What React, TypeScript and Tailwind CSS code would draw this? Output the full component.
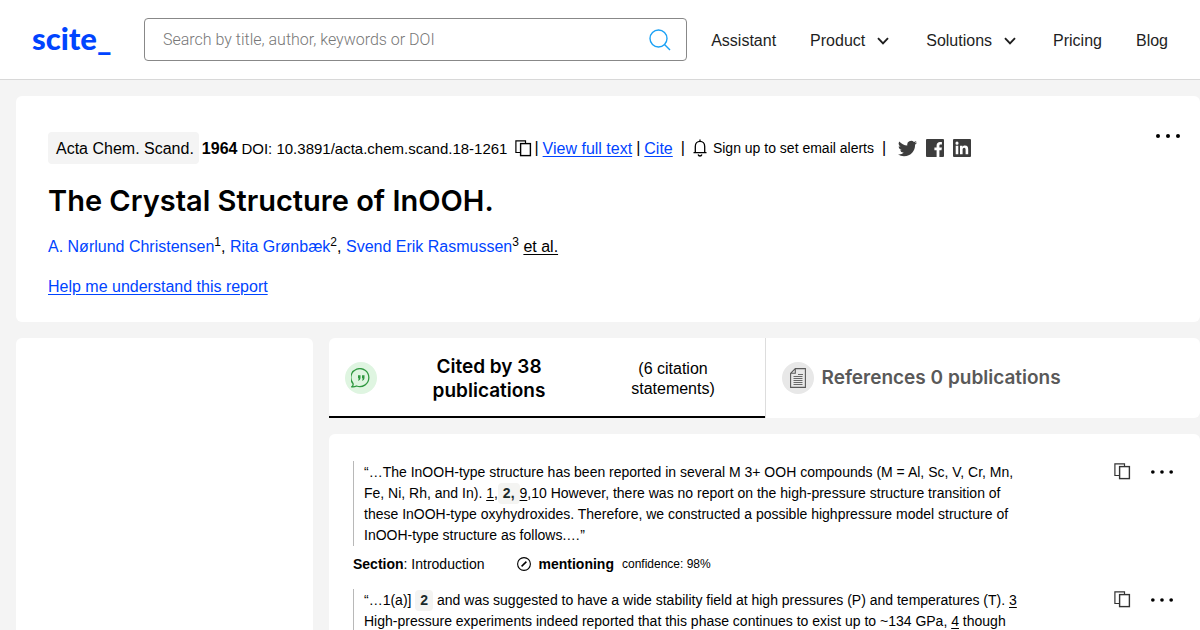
import type { ReactNode } from 'react';

function CopyIcon({ className }: { className: string }) {
  return (
    <svg viewBox="0 0 17 17" className={className} fill="none" stroke="currentColor" aria-hidden="true">
      <path d="M5 12.5H.9V.9h9.6V3" strokeWidth="1.2" />
      <rect x="5.6" y="3.6" width="9.8" height="12" fill="white" strokeWidth="1.4" />
    </svg>
  );
}

function MoreIcon({ className }: { className: string }) {
  return (
    <svg viewBox="0 0 24 4" className={className} fill="currentColor" aria-hidden="true">
      <circle cx="2" cy="2" r="2" />
      <circle cx="12" cy="2" r="2" />
      <circle cx="22" cy="2" r="2" />
    </svg>
  );
}

function ChevronIcon() {
  return (
    <svg viewBox="0 0 12 8" className="h-2 w-3" fill="none" stroke="currentColor" strokeWidth="1.9" aria-hidden="true">
      <path d="M1 1.2 6 6.4l5-5.2" />
    </svg>
  );
}

function TwitterIcon() {
  return (
    <svg viewBox="0 0 24 24" className="size-[19px]" fill="currentColor" aria-hidden="true">
      <path d="M23.95 4.57a10 10 0 0 1-2.82.77 4.96 4.96 0 0 0 2.16-2.72c-.95.55-2 .95-3.13 1.18a4.92 4.92 0 0 0-8.38 4.48C7.69 8.09 4.07 6.13 1.64 3.16a4.92 4.92 0 0 0 1.52 6.57 4.9 4.9 0 0 1-2.23-.61v.06a4.92 4.92 0 0 0 3.95 4.83 5 5 0 0 1-2.21.08 4.94 4.94 0 0 0 4.6 3.42A9.87 9.87 0 0 1 0 19.54a13.99 13.99 0 0 0 7.55 2.21c9.05 0 14-7.5 14-13.98 0-.21 0-.42-.02-.63a9.94 9.94 0 0 0 2.46-2.55z" />
    </svg>
  );
}

function FacebookIcon() {
  return (
    <svg viewBox="0 0 18 18" className="size-[18px]" aria-hidden="true">
      <rect width="18" height="18" rx="1" fill="currentColor" />
      <path d="M10.600 18v-6.800H8.400V8.500h2.200V6.600c0-2.300 1.400-3.500 3.400-3.500h1.900v2.400h-1.200c-1 0-1.300.5-1.300 1.300v1.700h2.500l-.4 2.700h-2.100V18z" fill="white" />
    </svg>
  );
}

function LinkedinIcon() {
  return (
    <svg viewBox="0 0 18 18" className="size-[18px]" aria-hidden="true">
      <rect width="18" height="18" rx="1" fill="currentColor" />
      <path d="M2.700 6.800h2.600v8.400H2.700zM4 2.600a1.500 1.500 0 1 1 0 3.100 1.500 1.500 0 0 1 0-3.100zM7 6.800h2.500v1.100c.5-.8 1.400-1.300 2.500-1.300 2.500 0 3.200 1.600 3.200 3.900v4.700h-2.600v-4.200c0-1.200-.2-2.200-1.400-2.200-1.300 0-1.600 1-1.600 2.200v4.200H7z" fill="white" />
    </svg>
  );
}

function BellIcon() {
  return (
    <svg viewBox="0 0 14 18" className="h-[18px] w-3.5" fill="none" stroke="currentColor" strokeWidth="1.3" aria-hidden="true">
      <path d="M.5 13.700h13M2.300 13.500V7.400C2.300 4.500 4.300 2.400 7 2.400s4.700 2.100 4.700 5v6.100M7 .5v2M5.100 15.500c.3.900 1 1.500 1.900 1.500s1.600-.6 1.900-1.500" />
    </svg>
  );
}

function Statement({ children }: { children: ReactNode }) {
  return (
    <div className="flex items-start justify-between">
      <blockquote className="max-w-[670px] border-l border-[#b8b8b8] pt-px pl-2.5 text-sm leading-[21px]">{children}</blockquote>
      <div className="flex shrink-0 items-center gap-5 pt-0.5 pr-[27px]">
        <button type="button" aria-label="Copy statement" className="text-[#333]">
          <CopyIcon className="size-[17px]" />
        </button>
        <button type="button" aria-label="More options">
          <MoreIcon className="h-1 w-[22px]" />
        </button>
      </div>
    </div>
  );
}

function Mark({ children }: { children: ReactNode }) {
  return <span className="inline-block rounded bg-[#f4f4f2] px-[5px] font-bold text-[#1a2a2a]">{children}</span>;
}

function Ref({ children }: { children: ReactNode }) {
  return <a href="#" className="underline underline-offset-2">{children}</a>;
}

export default function App() {
  return (
    <div className="flex h-screen flex-col overflow-hidden bg-[#f4f4f4] font-['Liberation_Sans',sans-serif] text-base text-black">
      <header className="flex h-20 shrink-0 items-center border-b border-[#d8d8d8] bg-white px-8">
        <a href="#" className="w-28 shrink-0 pb-1 font-['Lato',sans-serif] text-[31px] leading-8 font-black text-[#0044ff]">scite_</a>
        <form className="flex h-[43px] flex-1 items-center rounded border border-[#888] pr-[15px] pl-[18px]">
          <input
            type="search"
            aria-label="Search"
            placeholder="Search by title, author, keywords or DOI"
            className="min-w-0 flex-1 font-['Roboto',sans-serif] font-light outline-none placeholder:text-[#777]"
          />
          <button type="button" aria-label="Search" className="text-[#1ba1f5]">
            <svg viewBox="0 0 22 22" className="size-[22px]" fill="none" stroke="currentColor" strokeWidth="1.4" aria-hidden="true">
              <circle cx="9.500" cy="9.500" r="8.500" />
              <path d="m15.500 15.500 5.500 5.500" />
            </svg>
          </button>
        </form>
        <nav className="ml-6 flex items-center gap-[34px] pt-0.5 text-[#1e1e1e]">
          <a href="#">Assistant</a>
          <button type="button" className="flex items-center gap-3 pr-[3px]">Product <ChevronIcon /></button>
          <button type="button" className="flex items-center gap-3 pr-[3px]">Solutions <ChevronIcon /></button>
          <a href="#">Pricing</a>
          <a href="#">Blog</a>
        </nav>
      </header>

      <main className="flex min-h-0 flex-1 flex-col gap-4 pt-4 pl-4">
        <section className="flex shrink-0 items-start rounded-md bg-white pt-9 pr-5 pb-6 pl-8">
          <div className="flex-1">
            <div className="flex h-8 items-center whitespace-nowrap">
              <span className="mr-[3px] rounded bg-[#f4f4f4] pt-[5px] pr-[5px] pb-[3px] pl-2">Acta Chem. Scand.</span>
              <strong className="pt-0.5">1964</strong>
              <span className="ml-1 pt-0.5 text-[15px]">DOI: 10.3891/acta.chem.scand.18-1261</span>
              <button type="button" aria-label="Copy DOI" className="ml-2"><CopyIcon className="size-[17px]" /></button>
              <span className="ml-0.5">|</span>
              <a href="#" className="ml-1 pt-0.5 text-[#0044ff] underline underline-offset-2">View full text</a>
              <span className="ml-1">|</span>
              <a href="#" className="ml-1 pt-0.5 text-[#0044ff] underline underline-offset-2">Cite</a>
              <span className="ml-2">|</span>
              <button type="button" className="ml-2 flex items-center gap-1.5 text-sm"><BellIcon />Sign up to set email alerts</button>
              <span className="ml-2">|</span>
              <span className="ml-3 flex items-center gap-[9px] text-[#3d3d3d]">
                <a href="#" aria-label="Twitter"><TwitterIcon /></a>
                <a href="#" aria-label="Facebook"><FacebookIcon /></a>
                <a href="#" aria-label="LinkedIn"><LinkedinIcon /></a>
              </span>
            </div>
            <h1 className="mt-[17px] font-['Inter',sans-serif] text-[29px] leading-10 font-semibold">The Crystal Structure of InOOH.</h1>
            <p className="mt-3.5 leading-6">
              <a href="#" className="text-[#0044ff]">A. Nørlund Christensen</a><sup className="text-xs">1</sup>,{' '}
              <a href="#" className="text-[#0044ff]">Rita Grønbæk</a><sup className="text-xs">2</sup>,{' '}
              <a href="#" className="text-[#0044ff]">Svend Erik Rasmussen</a><sup className="text-xs">3</sup>{' '}
              <a href="#" className="underline underline-offset-2">et al.</a>
            </p>
            <a href="#" className="-mb-px mt-4 block w-fit leading-6 text-[#0044ff] underline underline-offset-2">Help me understand this report</a>
          </div>
          <button type="button" aria-label="More options"><MoreIcon className="mt-0.5 h-1 w-6" /></button>
        </section>

        <div className="flex min-h-0 flex-1 gap-4">
          <aside className="w-[297px] shrink-0 rounded-t-md bg-white" />
          <div className="flex min-w-0 flex-1 flex-col gap-4">
            <div className="grid h-20 shrink-0 grid-cols-2 rounded-md bg-white">
              <button type="button" className="flex items-center rounded-tl-md border-b-2 border-black px-4 pt-0.5">
                <span className="flex size-8 shrink-0 items-center justify-center rounded-full bg-[#dff5e1] text-[#2f9840]">
                  <svg viewBox="0 0 20 20" className="size-5" fill="none" stroke="currentColor" strokeWidth="1.3" aria-hidden="true">
                    <path d="M.8 18.800c1.200-.8 1.600-1.700 1.200-3.300A9 9 0 1 1 5.500 18c-1.500.8-3 1-4.700.8z" />
                    <path d="M7 7.300h2.500v2.500c0 1.600-.8 2.600-2.100 3l-.4-.8c.7-.3 1-.9 1-1.500H7zm4 0h2.500v2.500c0 1.600-.8 2.600-2.100 3l-.4-.8c.7-.3 1-.9 1-1.500h-1z" fill="currentColor" stroke="none" />
                  </svg>
                </span>
                <span className="ml-10 w-[144px] pt-0.5 font-['Inter',sans-serif] text-[19px] leading-6 font-semibold">Cited by 38 publications</span>
                <span className="ml-16 w-[96px] pt-0.5 leading-5">(6 citation statements)</span>
              </button>
              <button type="button" className="flex items-center gap-2 border-l border-[#ddd] px-4 text-[#595959]">
                <span className="flex size-8 shrink-0 items-center justify-center rounded-full bg-[#e8e8e8]">
                  <svg viewBox="0 0 16 20" className="h-5 w-4" fill="none" stroke="currentColor" strokeWidth="1.1" aria-hidden="true">
                    <path d="M.6 5.300 5.300.6h10.100v18.800H.6zM5.300.6v4.700H.6" />
                    <path d="M8 6.500h5M3.500 8.500h9M3.500 10.500h9M3.500 12.500h9M3.500 14.500h9M3.500 16.500h9" strokeWidth=".9" />
                  </svg>
                </span>
                <span className="font-['Inter',sans-serif] text-[19px] font-semibold">References 0 publications</span>
              </button>
            </div>

            <section className="min-h-0 flex-1 overflow-hidden rounded-t-md bg-white pt-[27px] pl-6">
              <Statement>
                “…The InOOH-type structure has been reported in several M 3+ OOH compounds (M = Al, Sc, V, Cr, Mn, Fe, Ni, Rh, and In). <Ref>1</Ref>,<Mark>2,</Mark><Ref>9</Ref>,10 However, there was no report on the high-pressure structure transition of these InOOH-type oxyhydroxides. Therefore, we constructed a possible highpressure model structure of InOOH-type structure as follows.…”
              </Statement>
              <div className="mt-2 mb-[15px] flex h-5 items-center text-sm">
                <span><strong>Section</strong>: Introduction</span>
                <svg viewBox="0 0 14 14" className="mr-2 ml-8 size-3.5" fill="none" stroke="currentColor" strokeWidth="1.1" aria-hidden="true">
                  <circle cx="7" cy="7" r="6.400" />
                  <path d="M4.600 9.400 9.400 4.600" strokeWidth="1.500" />
                </svg>
                <strong>mentioning</strong>
                <span className="ml-2 text-xs">confidence: 98%</span>
              </div>
              <Statement>
                “…1(a)] <Mark>2</Mark> and was suggested to have a wide stability field at high pressures (P) and temperatures (T). <Ref>3</Ref> High-pressure experiments indeed reported that this phase continues to exist up to ~134 GPa, <Ref>4</Ref> though
              </Statement>
            </section>
          </div>
        </div>
      </main>
    </div>
  );
}
